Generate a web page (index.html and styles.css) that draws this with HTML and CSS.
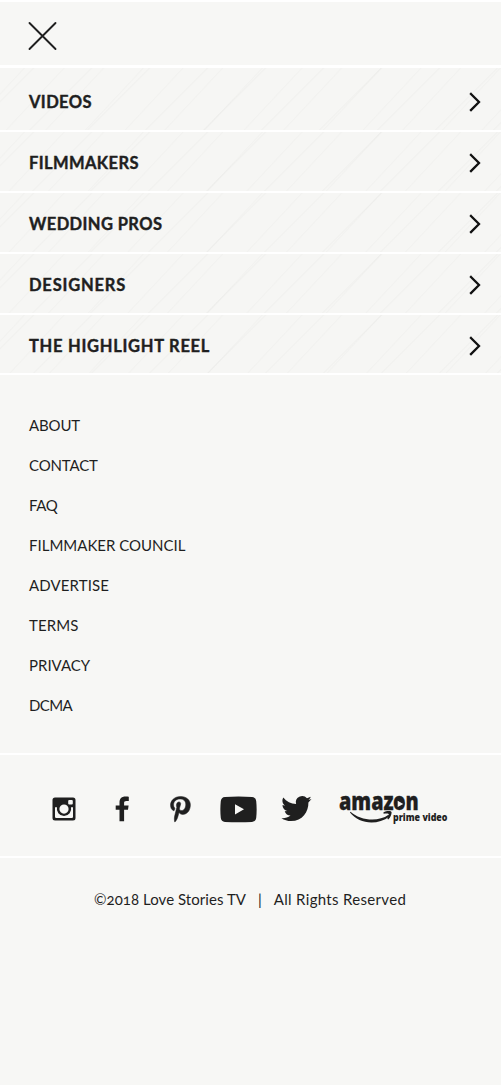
FILE: index.html
```
<!DOCTYPE html>
<html lang="en">
<head>
<meta charset="utf-8">
<meta name="viewport" content="width=device-width, initial-scale=1">
<title>Love Stories TV</title>
<link rel="stylesheet" href="styles.css">
</head>
<body>
<header class="top">
  <button class="close" aria-label="Close menu"><svg width="30" height="30" viewBox="0 0 30 30"><path d="M2.500 2 28.500 28M28.500 2 2.500 28" fill="none" stroke="#1f1f1f" stroke-width="1.9" stroke-linecap="round"/></svg></button>
</header>
<nav class="primary">
  <a class="row"><span class="label videos">VIDEOS</span><svg class="chevron" viewBox="0 0 12 20"><path d="M2 2 10 10 2 18"/></svg></a>
  <a class="row"><span class="label filmmakers">FILMMAKERS</span><svg class="chevron" viewBox="0 0 12 20"><path d="M2 2 10 10 2 18"/></svg></a>
  <a class="row"><span class="label wedding">WEDDING PROS</span><svg class="chevron" viewBox="0 0 12 20"><path d="M2 2 10 10 2 18"/></svg></a>
  <a class="row"><span class="label designers">DESIGNERS</span><svg class="chevron" viewBox="0 0 12 20"><path d="M2 2 10 10 2 18"/></svg></a>
  <a class="row"><span class="label reel">THE HIGHLIGHT REEL</span><svg class="chevron" viewBox="0 0 12 20"><path d="M2 2 10 10 2 18"/></svg></a>
</nav>
<nav class="secondary">
  <a class="about">ABOUT</a>
  <a class="contact">CONTACT</a>
  <a class="faq">FAQ</a>
  <a class="council">FILMMAKER COUNCIL</a>
  <a class="advertise">ADVERTISE</a>
  <a class="terms">TERMS</a>
  <a class="privacy">PRIVACY</a>
  <a class="dcma">DCMA</a>
</nav>
<div class="social">
  <svg class="instagram" width="24" height="24" viewBox="0 0 24 24"><path fill-rule="evenodd" d="M3 .5H21Q23.500.5 23.500 3V21Q23.500 23.500 21 23.500H3Q.5 23.500.5 21V3Q.5.5 3 .5ZM17.200 3Q16.200 3 16.200 4V6.400Q16.200 7.400 17.200 7.400H19.800Q20.800 7.400 20.800 6.400V4Q20.800 3 19.800 3ZM3 10.200V19.700Q3 20.900 4.200 20.900H19.800Q21 20.900 21 19.700V10.200H19A7.200 7.200 0 1 1 5 10.200ZM12 7.500A4.600 4.600 0 1 0 12 16.700A4.600 4.600 0 1 0 12 7.500Z"/></svg>
  <svg class="facebook" width="15" height="26" viewBox="0 0 15 26"><path d="M4.500 25.300V13.800H.7V9.400H4.500V6.500C4.500 2.700 6.800.6 10.300.6 12 .6 13.400.7 13.800.8V4.900H11.400C9.500 4.900 9.100 5.800 9.100 7.100V9.400H13.600L13 13.800H9.100V25.300Z"/></svg>
  <svg class="pinterest" width="21" height="27" viewBox="0 0 21 27"><path d="M10.800.5C4 .5.5 5.200.5 9.400 0.500 12 1.500 14.300 3.600 15.100 4 15.200 4.300 15.100 4.400 14.700L4.900 13C5 12.600 4.900 12.500 4.600 12.100 4 11.400 3.600 10.500 3.600 9.200 3.600 5.700 6.200 3.100 10.200 3.100 13.800 3.100 15.900 5.200 15.900 8.400 15.900 12.200 14.200 15 11.700 15 10.300 15 9.200 13.900 9.600 12.500 10 10.900 10.800 9.200 10.800 8 10.800 7 10.200 6.100 9 6.100 7.600 6.100 6.500 7.600 6.500 9.500 6.500 10.800 6.900 11.600 6.900 11.600L4.700 20.700C4.100 23.300 4.600 26.400 4.700 26.600 4.800 26.800 5 26.800 5.100 26.700 5.300 26.500 7.100 24.400 7.800 21.800L9.100 17.100C9.700 18.100 11.200 19 12.800 19 17.500 19 20.600 14.700 20.600 9 20.600 4.600 16.900.5 10.800.5Z" transform="scale(.99 .97)" stroke="#1f1f1f" stroke-width=".5"/></svg>
  <svg class="youtube" width="37" height="27" viewBox="0 0 37 27"><path fill-rule="evenodd" d="M5 .9Q18.500-.1 32 .9Q35.800 1.200 36.200 5Q37.100 13.500 36.200 22Q35.800 25.600 32 25.900Q18.500 26.700 5 25.900Q1.200 25.600.8 22Q-.1 13.500.8 5Q1.200 1.200 5 .9ZM15 8.300V18.400L24 13.300Z"/></svg>
  <svg class="twitter" width="31" height="26" viewBox="0 0 31 26"><path d="M30.500 3.100 27.500 4C28.600 3.300 29.300 2.200 29.700.8L26 2.300A6.300 6.300 0 0 0 15.100 8C10 7.700 5.400 5.300 2.300 1.400.6 4.400 1.500 7.800 4.200 9.700L1.500 9C1.500 12 3.700 14.500 6.500 15.100L3.700 15.200C4.500 17.800 6.800 19.500 9.500 19.600 6.800 21.700 3.600 22.500.4 22.200 3.200 24 6.500 25.100 10 25.100 21.500 25.100 27.600 15.700 27.400 6.500Z"/></svg>
  <svg class="amazon" width="110" height="32" viewBox="0 0 110 32">
    <text class="amazon-name" y="14"><tspan x="0" textLength="54.500" lengthAdjust="spacingAndGlyphs">amaz</tspan><tspan x="54" textLength="25.800" lengthAdjust="spacingAndGlyphs">on</tspan></text>
    <circle cx="60.700" cy="7.700" r="4.800"/>
    <path class="play" d="M58.700 4.700 64.200 7.900 58.700 11.100Z"/>
    <path d="M11.500 15.700C21 24.500 39 26.500 49.500 18.800L50.500 20.400C38 29.800 20 28 11 16.500Z"/>
    <path d="M44.500 16.200C47.500 14.600 52.500 14.500 52.600 16.300 52.700 18.500 51.400 21.800 49.200 23.400L48.300 22.700C49.500 20.500 50.200 18.700 49.600 18.100 48.800 17.300 46.700 17.600 44.600 17.800Z"/>
    <text class="amazon-sub" x="54" y="25" textLength="54.500" lengthAdjust="spacingAndGlyphs">prime video</text>
  </svg>
</div>
<footer class="legal"><span class="copy">©2018 Love Stories TV</span><span class="bar">|</span><span class="rights">All Rights Reserved</span></footer>
</body>
</html>
```
FILE: styles.css
```
* { box-sizing: border-box; }
body {
  margin: 0;
  min-height: 1085px;
  background: #f7f7f5;
  color: #1f1f1f;
  font-family: Lato, "Open Sans", sans-serif;
}
.top {
  height: 68px;
  padding: 19px 27px 0;
  border-top: 2px solid #fff;
  border-bottom: 3px solid #fff;
}
.close { display: block; width: 30px; height: 30px; padding: 0; border: 0; background: none; }
.primary { display: flex; flex-direction: column; }
.row {
  display: flex;
  align-items: center;
  justify-content: space-between;
  height: 61px;
  padding: 2px 20px 0 29px;
  border-bottom: 2px solid #fff;
  background:
    repeating-linear-gradient(135deg, transparent 0 23px, rgba(60,60,50,.025) 23.500px 24px, transparent 25px 41px),
    repeating-linear-gradient(133deg, transparent 0 17px, rgba(60,60,50,.018) 17.500px 18px, transparent 19px 29px),
    #f6f6f4;
}
.row:first-child { height: 64px; padding-top: 5px; }
.row:last-child { height: 60px; padding-top: 3px; }
.label { font-size: 16.500px; line-height: 20px; font-weight: 700; letter-spacing: .4px; -webkit-text-stroke: .4px #1f1f1f; }
.designers { letter-spacing: .8px; }
.reel { letter-spacing: .72px; }
.chevron { width: 12px; height: 20px; fill: none; stroke: #111; stroke-width: 2.300; stroke-linecap: square; }
.secondary {
  display: flex;
  flex-direction: column;
  height: 380px;
  padding: 30px 29px 0;
  border-bottom: 2px solid #fff;
  font-size: 15px;
  line-height: 40px;
}
.about, .contact { letter-spacing: -.15px; }
.faq { letter-spacing: -.35px; }
.advertise, .terms { letter-spacing: .12px; }
.dcma { letter-spacing: -.6px; }
.social {
  display: flex;
  align-items: flex-start;
  height: 103px;
  padding: 41px 0 0 52px;
  border-bottom: 2px solid #fff;
  fill: #1f1f1f;
}
.social svg { flex: none; overflow: visible; }
.instagram { margin-top: 1px; }
.facebook { margin-left: 39px; }
.pinterest { margin-left: 40px; }
.youtube { margin-left: 29px; }
.twitter { margin-left: 24px; }
.amazon { margin-left: 27px; }
.amazon-name { font: 800 24px "Open Sans", sans-serif; stroke: #1f1f1f; stroke-width: .3px; }
.amazon-sub { font: 800 10.500px "Open Sans", sans-serif; }
.play { fill: #f7f7f5; }
.legal { display: flex; padding: 31px 0 0 94px; font-size: 15px; line-height: 20px; white-space: pre; font-variant-numeric: oldstyle-nums; }
.copy { letter-spacing: .05px; }
.bar { margin: 0 12px; }
.rights { letter-spacing: .32px; }
```
